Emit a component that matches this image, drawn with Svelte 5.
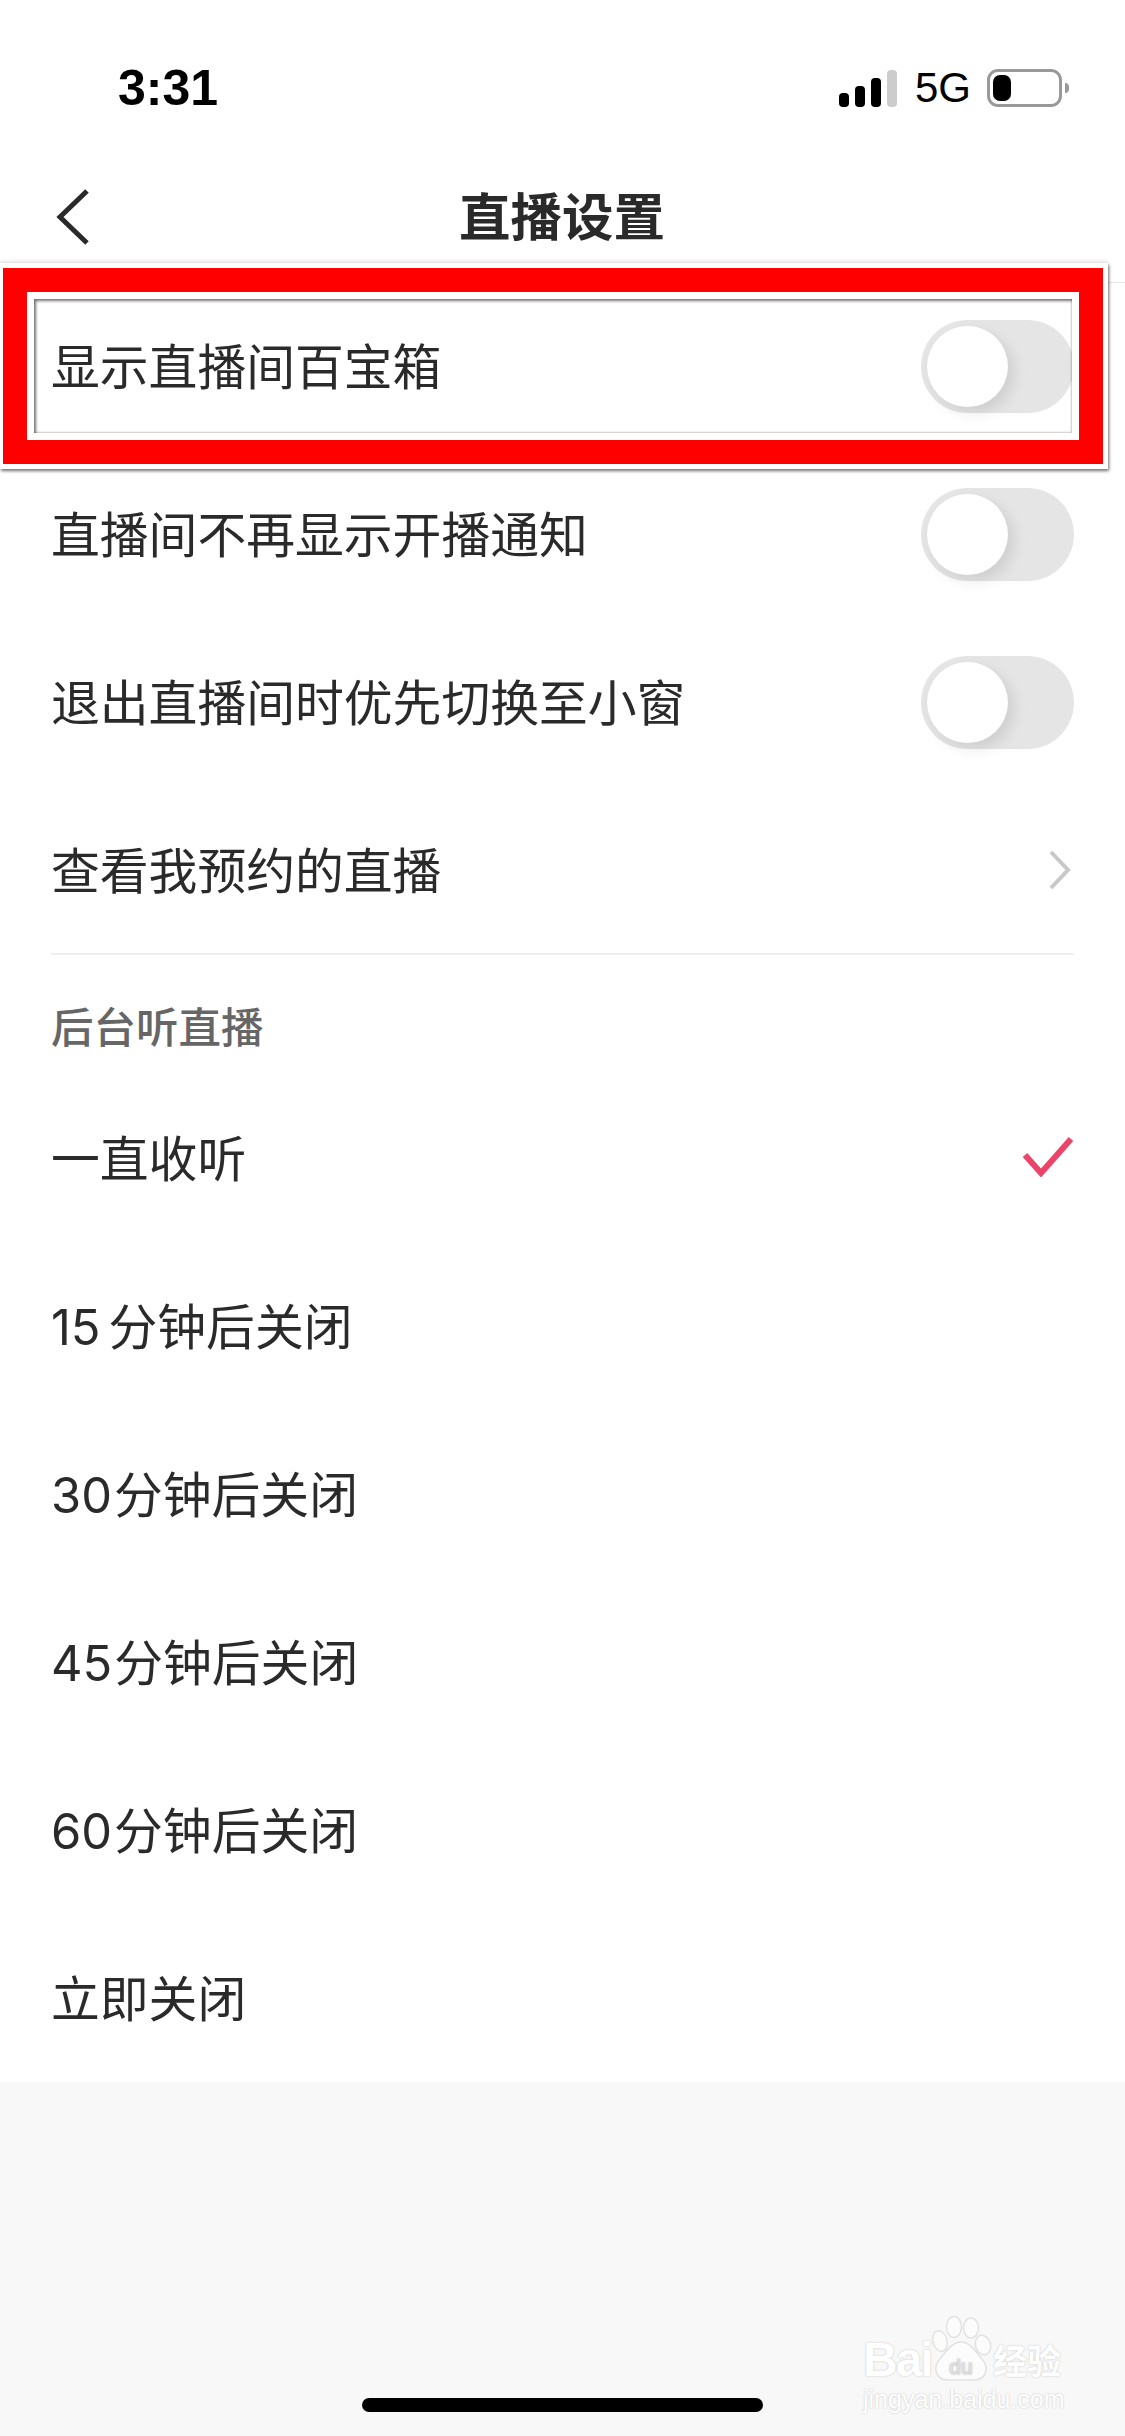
<script>
  const toggles = ['显示直播间百宝箱', '直播间不再显示开播通知', '退出直播间时优先切换至小窗'];
  const timers = [
    { num: '', text: '一直收听' },
    { num: '15', text: '分钟后关闭' },
    { num: '30', text: '分钟后关闭' },
    { num: '45', text: '分钟后关闭' },
    { num: '60', text: '分钟后关闭' },
    { num: '', text: '立即关闭' }
  ];
</script>

<div class="page">
  <header class="status">
    <span class="time">3:31</span>
    <div class="status-right">
      <div class="signal">
        <i class="b1"></i><i class="b2"></i><i class="b3"></i><i class="b4"></i>
      </div>
      <span class="net">5G</span>
      <div class="battery"><i></i></div>
      <div class="nub"></div>
    </div>
  </header>

  <nav class="nav">
    <svg class="back" width="34" height="56" viewBox="0 0 34 56">
      <path d="M31 2 L4 28 L31 54" fill="none" stroke="#2a2a2a" stroke-width="5" />
    </svg>
    <h1>直播设置</h1>
  </nav>

  <main class="list">
    {#each toggles as label}
      <div class="row">
        <span class="label">{label}</span>
        <div class="toggle"><div class="knob"></div></div>
      </div>
    {/each}
    <div class="row">
      <span class="label">查看我预约的直播</span>
      <svg class="more" width="24" height="40" viewBox="0 0 24 40">
        <path d="M3 2 L20 20 L3 38" fill="none" stroke="#c8c8c8" stroke-width="4" />
      </svg>
    </div>
    <div class="divider"></div>
    <div class="section">后台听直播</div>
    {#each timers as item, i}
      <div class="row">
        <span class="timer"><span class="num" class:wide={item.num === '15'}>{item.num}</span>{item.text}</span>
        {#if i === 0}
          <svg class="check" width="52" height="40" viewBox="0 0 52 40">
            <path d="M3 18 L19 36 L49 2" fill="none" stroke="#ec4468" stroke-width="6" />
          </svg>
        {/if}
      </div>
    {/each}
  </main>

  <div class="footer">
    <div class="home"></div>
  </div>

  <!-- annotation box pasted over the first row -->
  <div class="frame"><div class="red"><div class="gap"></div></div></div>

  <div class="mark">
    <div class="mark-top">
      <span class="bai">Bai</span>
      <svg width="60" height="65" viewBox="0 0 60 65">
        <g fill="#fcfcfc" stroke="#e2e2e2" stroke-width="1.5">
          <ellipse cx="8" cy="25" rx="7" ry="10.5" transform="rotate(-15 8 25)" />
          <ellipse cx="22" cy="11" rx="7.5" ry="10.5" />
          <ellipse cx="39" cy="12" rx="7.5" ry="10" />
          <ellipse cx="51" cy="29" rx="7.5" ry="10" transform="rotate(-15 51 29)" />
          <path d="M29 26 C38 26 44 36 50 43 C58 52 54 64 42 64 L16 64 C4 64 0 52 8 43 C14 36 20 26 29 26 Z" />
        </g>
        <text x="29" y="58" text-anchor="middle" font-size="21" fill="#f6f6f6" stroke="#d8d8d8" stroke-width="0.6" font-family="Liberation Sans, sans-serif">du</text>
      </svg>
      <span class="jy">经验</span>
    </div>
    <div class="url">jingyan.baidu.com</div>
  </div>
</div>

<style>
  :global(body) {
    margin: 0;
    background: #fff;
  }

  .page {
    position: relative;
    width: 1125px;
    height: 2436px;
    overflow: hidden;
    display: flex;
    flex-direction: column;
    background: #fff;
    font-family: 'Noto Sans CJK SC', 'Liberation Sans', sans-serif;
    color: #2a2a2a;
  }

  .status {
    height: 150px;
    flex: none;
    box-sizing: border-box;
    padding: 0 56px 0 118px;
    display: flex;
    justify-content: space-between;
    align-items: flex-start;
  }

  .time {
    margin-top: 58px;
    font: 700 50px/60px 'Liberation Sans', sans-serif;
    color: #000;
  }

  .status-right {
    display: flex;
    align-items: center;
    margin-top: 69px;
    height: 38px;
  }

  .signal {
    display: flex;
    align-items: flex-end;
    gap: 6px;
    height: 38px;
  }

  .signal i {
    display: block;
    width: 10px;
    border-radius: 4px;
    background: #000;
  }

  .b1 { height: 14px; }
  .b2 { height: 21px; }
  .b3 { height: 29px; }
  .signal .b4 { height: 37px; background: #ccc; }

  .net {
    margin-left: 18px;
    font: 400 42px/38px 'Liberation Sans', sans-serif;
    color: #000;
  }

  .battery {
    margin-left: 16px;
    box-sizing: border-box;
    width: 75px;
    height: 38px;
    border: 3px solid #999;
    border-radius: 11px;
    padding: 3px;
  }

  .battery i {
    display: block;
    width: 18px;
    height: 26px;
    border-radius: 7px;
    background: #000;
  }

  .nub {
    margin-left: 3px;
    width: 4px;
    height: 10px;
    border-radius: 0 5px 5px 0;
    background: #999;
  }

  .nav {
    position: relative;
    height: 133px;
    flex: none;
    box-sizing: border-box;
    border-bottom: 1px solid #e8e8e8;
    display: flex;
    align-items: center;
    justify-content: center;
  }

  .back {
    position: absolute;
    left: 56px;
    top: 39px;
  }

  h1 {
    margin: 0 1px 4px 0;
    font-size: 51.5px;
    line-height: 64px;
    font-weight: 700;
    color: #2a2a2a;
  }

  .list {
    flex: none;
    padding: 0 51px;
    background: #fff;
  }

  .row {
    height: 168px;
    display: flex;
    align-items: center;
    justify-content: space-between;
    font-size: 48.8px;
    line-height: 60px;
  }

  .row svg {
    display: block;
  }

  .row .more {
    margin: -2px 2px 0 0;
  }

  .label {
    margin-top: -7px;
  }

  .timer {
    margin-top: -1px;
  }

  .row .check {
    margin-top: -2px;
  }

  .num {
    margin-right: 2px;
    font-family: Inter, 'Liberation Sans', sans-serif;
  }

  .num:empty {
    margin-right: 0;
  }

  .num.wide {
    margin-right: 8px;
  }

  .toggle {
    box-sizing: border-box;
    width: 153px;
    height: 93px;
    margin-top: -2px;
    padding: 6px;
    border-radius: 47px;
    background: #e5e5e5;
  }

  .knob {
    width: 81px;
    height: 81px;
    border-radius: 50%;
    background: #fff;
    box-shadow: 6px 6px 14px rgba(0, 0, 0, 0.1);
  }

  .divider {
    height: 2px;
    margin-top: -2px;
    background: #efefef;
  }

  .section {
    height: 119px;
    box-sizing: border-box;
    padding-top: 43px;
    font-size: 42.5px;
    line-height: 54px;
    font-weight: 500;
    color: #666;
  }

  .footer {
    flex: 1;
    background: #f8f8f8;
    display: flex;
    justify-content: center;
    align-items: flex-end;
    padding-bottom: 24px;
  }

  .home {
    width: 401px;
    height: 14px;
    border-radius: 7px;
    background: #000;
  }

  .frame {
    position: absolute;
    left: 0;
    top: 263px;
    box-sizing: border-box;
    width: 1108px;
    height: 206px;
    border: 5px solid #fff;
    border-left-width: 3px;
    box-shadow: 1px 2px 3px rgba(0, 0, 0, 0.55), 0 -2px 3px rgba(0, 0, 0, 0.1);
  }

  .red {
    box-sizing: border-box;
    height: 100%;
    border: 24px solid #f00;
  }

  .gap {
    box-sizing: border-box;
    height: 100%;
    border: 7px solid #fff;
    box-shadow: inset 2px 2px 3px rgba(0, 0, 0, 0.55), inset -1px -1px 2px rgba(0, 0, 0, 0.2);
  }

  .mark {
    position: absolute;
    left: 863px;
    top: 2316px;
    width: 205px;
    color: #fff;
    text-shadow: 0 0 2px #bdbdbd;
  }

  .mark-top {
    display: flex;
    align-items: flex-end;
    height: 65px;
  }

  .bai {
    width: 69px;
    letter-spacing: -2px;
    font: 700 48px/42px 'Liberation Sans', sans-serif;
  }

  .mark-top svg {
    display: block;
    flex: none;
  }

  .jy {
    margin-left: 1px;
    font-size: 34px;
    line-height: 42px;
    font-weight: 700;
    white-space: nowrap;
  }

  .url {
    margin-top: 3px;
    font: 400 25px/30px 'Liberation Sans', sans-serif;
    white-space: nowrap;
  }
</style>
